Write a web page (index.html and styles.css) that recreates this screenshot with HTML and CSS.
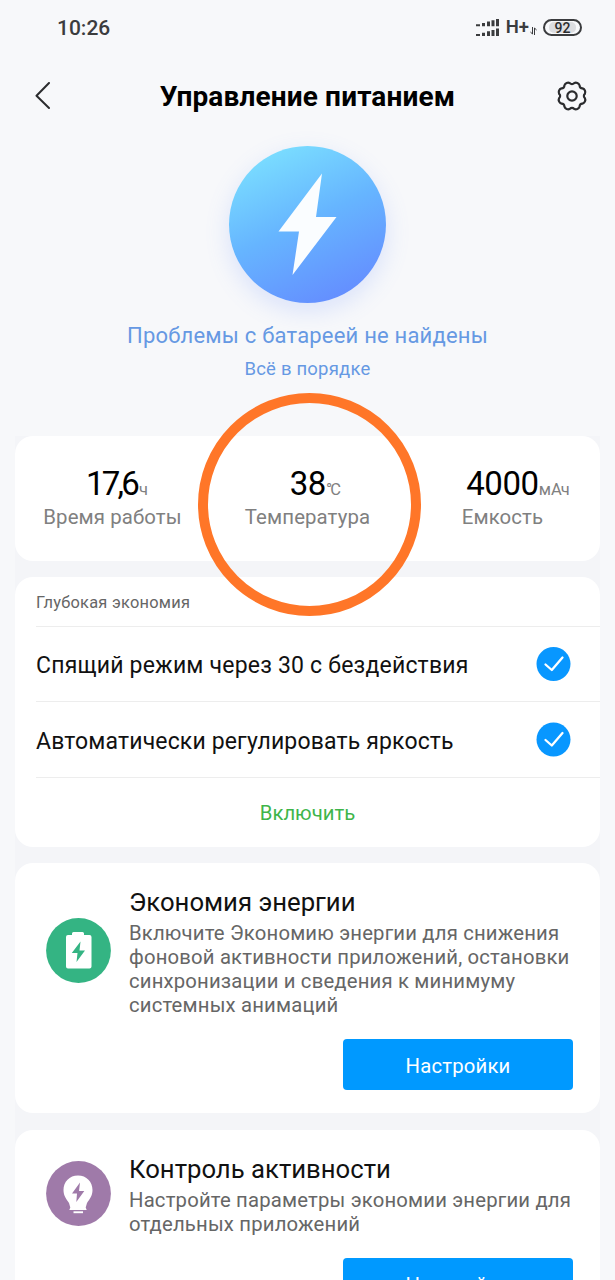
FILE: index.html
```html
<!DOCTYPE html>
<html lang="ru">
<head>
<meta charset="utf-8">
<title>Управление питанием</title>
<link rel="stylesheet" href="styles.css">
</head>
<body>
<div class="screen">
  <div class="statusbar">
    <span class="clock">10:26</span>
    <div class="status-icons">
      <svg class="signal" width="23" height="18" viewBox="0 0 23 18" fill="#3b3c3e">
        <path d="M0 5.200h4v2h-4zM6 4h3v3.200h-3zM11 2.500h3v4.700h-3zM15.500 1.300h3v5.900h-3zM20 0h3v7.200h-3z"/>
        <path d="M0 15h4v2h-4zM6 13.700h3v3.300h-3zM11 12.300h3v4.700h-3zM15.500 11h3v6h-3zM20 9.500h3v7.500h-3z"/>
      </svg>
      <span class="network">H+</span>
      <svg class="traffic" width="7" height="8" viewBox="0 0 7 8" fill="none" stroke="#3b3c3e" stroke-width="1"><path d="M2.500 0v7L.4 5M4.500 8V1l2.100 2"/></svg>
      <span class="battery"><span class="battery-level">92</span></span>
    </div>
  </div>
  <header class="titlebar">
    <svg class="back" width="16" height="28" viewBox="0 0 16 28" fill="none" stroke="#2b2c2e" stroke-width="2" stroke-linecap="round" stroke-linejoin="round"><path d="M15 1 2.500 13.700 15 26"/></svg>
    <h1 class="title">Управление питанием</h1>
    <svg class="gear" width="32" height="32" viewBox="-16 -16 32 32" fill="none" stroke="#2b2c2e" stroke-width="2.200" stroke-linejoin="round">
      <path d="M2.030-12.840A4 4 0 0 1 7.640-10.520A2.600 2.600 0 0 0 10.520-7.640A4 4 0 0 1 12.840-2.030A2.600 2.600 0 0 0 12.840 2.030A4 4 0 0 1 10.520 7.640A2.600 2.600 0 0 0 7.640 10.520A4 4 0 0 1 2.030 12.840A2.600 2.600 0 0 0-2.030 12.840A4 4 0 0 1-7.640 10.520A2.600 2.600 0 0 0-10.520 7.640A4 4 0 0 1-12.840 2.030A2.600 2.600 0 0 0-12.840-2.030A4 4 0 0 1-10.520-7.640A2.600 2.600 0 0 0-7.640-10.520A4 4 0 0 1-2.030-12.840A2.600 2.600 0 0 0 2.030-12.840Z"/>
      <circle r="4.700"/>
    </svg>
  </header>

  <section class="hero">
    <div class="orb">
      <svg width="157" height="157" viewBox="0 0 157 157"><path d="M93 27.500 49.500 85.500H70L63.500 129 107.500 71H87Z" fill="#fafdff"/></svg>
    </div>
    <p class="hero-title">Проблемы с батареей не найдены</p>
    <p class="hero-sub">Всё в порядке</p>
  </section>

  <main class="cards">
    <section class="card stats">
      <div class="stat stat-time"><div class="value"><span class="num">17,6</span><span class="unit">ч</span></div><div class="label">Время работы</div></div>
      <div class="stat stat-temp"><div class="value"><span class="num">38</span><span class="unit">°C</span></div><div class="label">Температура</div><div class="ring"></div></div>
      <div class="stat stat-capacity"><div class="value"><span class="num">4000</span><span class="unit">мАч</span></div><div class="label">Емкость</div></div>
    </section>

    <section class="card saving">
      <div class="saving-head">Глубокая экономия</div>
      <div class="option option-sleep"><span class="option-text">Спящий режим через 30 с бездействия</span>
        <svg width="35" height="35" viewBox="0 0 35 35"><circle cx="17.500" cy="17" r="17" fill="#0897ff"/><path d="M9.500 17.500 15.800 23 26.500 10.500" fill="none" stroke="#fff" stroke-width="2.300" stroke-linecap="round" stroke-linejoin="round"/></svg></div>
      <div class="option option-auto"><span class="option-text">Автоматически регулировать яркость</span>
        <svg width="35" height="35" viewBox="0 0 35 35"><circle cx="17.500" cy="17.500" r="17" fill="#0897ff"/><path d="M9.500 18 15.800 23.500 26.500 11" fill="none" stroke="#fff" stroke-width="2.300" stroke-linecap="round" stroke-linejoin="round"/></svg></div>
      <div class="enable">Включить</div>
    </section>

    <section class="card feature">
      <svg class="icon-economy" width="65" height="65" viewBox="0 0 65 65"><circle cx="32.500" cy="32.500" r="32.400" fill="#34b483"/><path d="M27.500 14h9a1.500 1.500 0 0 1 1.500 1.500V17h5.500a2 2 0 0 1 2 2v29.500a2 2 0 0 1-2 2H22a2 2 0 0 1-2-2V19a2 2 0 0 1 2-2h4v-1.500a1.500 1.500 0 0 1 1.500-1.500z" fill="#fff"/><path d="M34.500 23.500 25.800 35H31.500L30.500 44 39 32.500H33.500Z" fill="#34b483"/></svg>
      <div class="feature-body">
        <h2 class="feature-title">Экономия энергии</h2>
        <p class="feature-text">Включите Экономию энергии для снижения<br>фоновой активности приложений, остановки<br>синхронизации и сведения к минимуму<br>системных анимаций</p>
        <button class="button">Настройки</button>
      </div>
    </section>

    <section class="card feature">
      <svg class="icon-control" width="65" height="65" viewBox="0 0 65 65"><circle cx="32.500" cy="32.500" r="32.400" fill="#9f7aa9"/><path d="M32 14.500c-8.500 0-14.500 6.300-14.500 14.500 0 6 3 9 5.500 13l1.300 4.500-1 2.500h17.400l-1-2.500 1.300-4.500c2.500-4 5.500-7 5.500-13 0-8.200-6-14.500-14.500-14.500z" fill="#fff"/><path d="M27.500 50.300h9.500v1.900h-9.500z" fill="#fff"/><path d="M34 21.500 26 32.500h5L30.300 41 38.300 30H33Z" fill="#9f7aa9"/></svg>
      <div class="feature-body">
        <h2 class="feature-title">Контроль активности</h2>
        <p class="feature-text">Настройте параметры экономии энергии для<br>отдельных приложений</p>
        <button class="button">Настройки</button>
      </div>
    </section>
  </main>
</div>
</body>
</html>
```
FILE: styles.css
```css
* { box-sizing: border-box; }
html, body { margin: 0; height: 1280px; overflow: hidden; }
body { background: #f7f8fa; font-family: Roboto, "Noto Sans", sans-serif; color: #111; }
h1, h2, p { margin: 0; font-weight: 400; }
svg { display: block; flex: none; }
span { white-space: nowrap; }
.screen { width: 615px; height: 1280px; overflow: hidden; }

.statusbar { height: 56px; display: flex; justify-content: space-between; padding: 0 33px 0 57px; }
.clock { font-weight: 500; font-size: 21px; line-height: 56px; color: #3b3c3e; }
.status-icons { display: flex; align-items: center; height: 54px; }
.signal { margin-top: 2px; }
.network { margin-left: 7px; font-size: 18.500px; font-weight: 600; color: #3b3c3e; }
.traffic { margin: 8px 6px 0 1px; }
.battery { width: 39px; height: 17px; border: 2px solid #3b3c3e; border-radius: 9px; padding: 1px 4px; display: flex; }
.battery-level { flex: 1; background: #dcdde0; border-radius: 5px; font-size: 14px; line-height: 12px; font-weight: 500; text-align: center; color: #2b2c2e; }

.titlebar { height: 80px; padding: 0 27px 0 34px; display: flex; align-items: center; justify-content: space-between; }
.title { margin-left: 9px; font-size: 28px; font-weight: 700; letter-spacing: .15px; color: #000; }

.hero { height: 300px; padding-top: 10px; text-align: center; color: #6699e3; }
.orb { width: 157px; height: 157px; margin: 0 auto; border-radius: 50%; background: linear-gradient(155deg, #7de3ff 5%, #66b5ff 48%, #648bff 92%); box-shadow: 0 8px 24px rgba(100, 140, 255, .2); }
.hero-title { margin-top: 17px; font-size: 22px; line-height: 32px; letter-spacing: .2px; }
.hero-sub { margin-top: 3px; font-size: 18.500px; line-height: 28px; letter-spacing: .2px; }

.cards { width: 585px; margin-left: 15px; display: flex; flex-direction: column; gap: 16px; background: #f4f5f8; }
.card { flex: none; background: #fff; border-radius: 18px; }
.card:last-child { margin-top: 1px; }

.stats { height: 125px; display: grid; grid-template-columns: repeat(3, 195px); padding-top: 28px; text-align: center; }
.value { height: 40px; line-height: 40px; }
.num { font-size: 33px; color: #000; }
.unit { font-size: 16.500px; color: #808080; }
.label { font-size: 20.400px; line-height: 26px; letter-spacing: .1px; color: #808080; }
.stat-time .value { padding-left: 9px; }
.stat-time .num { letter-spacing: -2.800px; }
.stat-time .unit { margin-left: 2px; }
.stat-temp { position: relative; }
.stat-temp .value { padding-left: 14px; }
.stat-temp .num { letter-spacing: -.5px; }
.stat-temp .unit { letter-spacing: -1.800px; }
.stat-capacity .value { padding-left: 31px; }
.stat-capacity .num { letter-spacing: -.4px; }
.ring { position: absolute; left: -12px; top: -71px; width: 223px; height: 223px; border: 10px solid #ff7628; border-radius: 50%; }

.saving { height: 270px; padding-left: 21px; }
.saving-head { height: 50px; line-height: 51px; font-size: 16.400px; letter-spacing: .25px; color: #666; border-bottom: 1px solid #ededed; }
.option { display: flex; align-items: center; justify-content: space-between; padding-right: 29px; border-bottom: 1px solid #ededed; font-size: 23px; }
.option-text { padding-top: 3px; }
.option-sleep { height: 75px; letter-spacing: .2px; }
.option-auto { height: 76px; letter-spacing: .15px; }
.enable { margin-left: -21px; line-height: 70px; text-align: center; font-size: 20.300px; color: #3eb54a; }

.feature { height: 250px; display: flex; padding: 20px 27px 0 31px; }
.icon-economy { margin-top: 35px; }
.icon-control { margin-top: 11px; }
.feature-body { margin-left: 18px; flex: 1; display: flex; flex-direction: column; }
.feature-title { font-size: 25.700px; line-height: 38px; }
.feature-text { font-size: 20.300px; line-height: 24px; letter-spacing: .18px; color: #666; white-space: nowrap; }
.button { margin: 22px 0 0 auto; padding: 2px 0 0; width: 230px; height: 51px; flex: none; border: 0; border-radius: 4px; background: #0099ff; color: #fff; font: 20.300px Roboto, sans-serif; letter-spacing: .2px; }
```
